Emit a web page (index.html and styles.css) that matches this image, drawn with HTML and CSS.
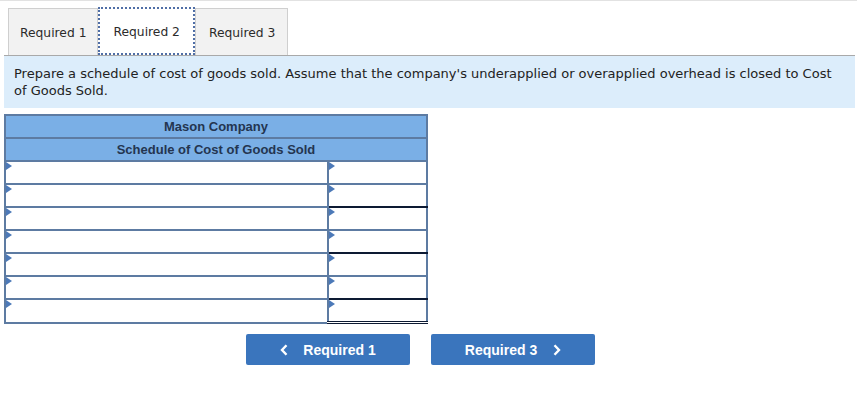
FILE: index.html
```html
<!DOCTYPE html>
<html>
<head>
<meta charset="utf-8">
<link rel="stylesheet" href="styles.css">
</head>
<body>
<div class="page">
  <div class="tabs">
    <div class="tab first">Required 1</div>
    <div class="tab active">Required 2</div>
    <div class="tab">Required 3</div>
  </div>
  <div class="instr">Prepare a schedule of cost of goods sold. Assume that the company's underapplied or overapplied overhead is closed to Cost of Goods Sold.</div>
  <table class="sched">
    <tr><th colspan="2">Mason Company</th></tr>
    <tr><th colspan="2">Schedule of Cost of Goods Sold</th></tr>
    <tr><td class="lab"><span class="mk"></span></td><td class="amt"><span class="mk"></span></td></tr>
    <tr><td class="lab"><span class="mk"></span></td><td class="amt tot"><span class="mk"></span></td></tr>
    <tr><td class="lab"><span class="mk"></span></td><td class="amt"><span class="mk"></span></td></tr>
    <tr><td class="lab"><span class="mk"></span></td><td class="amt tot"><span class="mk"></span></td></tr>
    <tr><td class="lab"><span class="mk"></span></td><td class="amt"><span class="mk"></span></td></tr>
    <tr><td class="lab"><span class="mk"></span></td><td class="amt tot"><span class="mk"></span></td></tr>
    <tr><td class="lab"><span class="mk"></span></td><td class="amt dbl"><span class="mk"></span></td></tr>
  </table>
  <div class="nav">
    <button class="btn"><svg class="chev" width="8" height="12" viewBox="0 0 8 12"><path d="M6.5 1.2 L2 6 L6.5 10.8" fill="none" stroke="#fff" stroke-width="2.4"/></svg>Required 1</button>
    <button class="btn">Required 3<svg class="chev r" width="8" height="12" viewBox="0 0 8 12"><path d="M1.5 1.2 L6 6 L1.5 10.8" fill="none" stroke="#fff" stroke-width="2.4"/></svg></button>
  </div>
</div>
</body>
</html>
```
FILE: styles.css
```css
html, body { margin: 0; padding: 0; background: #fff; }
.page {
  border-top: 1px solid #e2e2e2;
  padding: 7px 2px 0 4px;
  font-family: "DejaVu Sans", Verdana, sans-serif;
  color: #222;
}
.tabs {
  display: flex;
  padding-left: 4px;
  border-bottom: 1px solid #a9a9a9;
  height: 47px;
}
.tab {
  box-sizing: border-box;
  height: 47px;
  padding: 2px 12px 0 13px;
  display: flex;
  align-items: center;
  font-size: 12.3px;
  background: #f2f2f2;
  border: 1px solid #cfcfcf;
  border-bottom: none;
  color: #2b2b2b;
}
.tab.first { padding: 2px 11px 0 11px; }
.tab.active {
  background: #fff;
  border: 2px dotted #4f6ea6;
  height: 48px;
  margin-top: -1px;
  padding: 2px 13px 0 13px;
}
.instr {
  background: #dcedfb;
  padding: 9px 10px 9px 10px;
  font-size: 13px;
  line-height: 17px;
  color: #222;
}
.sched {
  margin-top: 6px;
  border-collapse: collapse;
  font-family: "Liberation Sans", Arial, sans-serif;
}
.sched th {
  background: #7aafe6;
  border: 2px solid #5d7ba2;
  height: 21px;
  padding: 0;
  font-size: 13px;
  font-weight: bold;
  color: #243550;
}
.sched td {
  border: 2px solid #5d7ba2;
  height: 21px;
  padding: 0;
  position: relative;
  background: #fff;
}
.sched td.lab { width: 321px; }
.sched td.amt { width: 97px; }
.sched td.tot { border-bottom: 2px solid #0d1a33; }
.sched td.dbl { border-bottom: 3px double #0d1a33; }
.mk {
  position: absolute;
  left: 0;
  top: 0;
  width: 0;
  height: 0;
  border-top: 4px solid transparent;
  border-bottom: 4px solid transparent;
  border-left: 6px solid #4c79b8;
}
.nav {
  display: flex;
  gap: 21px;
  margin: 10px 0 0 242px;
}
.btn {
  width: 164px;
  height: 31px;
  background: #3a75bd;
  border: none;
  border-radius: 2px;
  color: #fff;
  font-family: "Liberation Sans", Arial, sans-serif;
  font-size: 14px;
  font-weight: bold;
  display: flex;
  align-items: center;
  justify-content: center;
  padding: 0;
}
.chev { margin-right: 15px; }
.chev.r { margin-right: 0; margin-left: 16px; }
```
